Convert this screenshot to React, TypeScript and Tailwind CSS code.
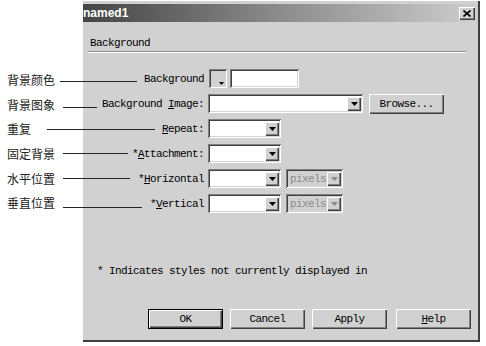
import type { ReactNode } from 'react'

const raised =
  'bg-[#d1d1d1] shadow-[inset_1px_1px_0_#ffffff,inset_-1px_-1px_0_#404040,inset_-2px_-2px_0_#808080]'
const sunken =
  'shadow-[inset_1px_1px_0_#808080,inset_-1px_-1px_0_#ffffff,inset_2px_2px_0_#404040,inset_-2px_-2px_0_#d4d4d4]'

function Arrow({ muted = false }: { muted?: boolean }) {
  return (
    <span className={`flex h-[14px] w-[14px] items-center justify-center ${raised}`}>
      <svg width="7" height="4" viewBox="0 0 7 4">
        <path d="M0 0h7L3.5 4z" fill={muted ? '#8a8a8a' : '#000'} />
      </svg>
    </span>
  )
}

function Combo({ width, muted = false, text }: { width: string; muted?: boolean; text?: string }) {
  return (
    <div
      className={`flex h-[19px] items-center justify-between pl-[4px] pr-[2px] ${width} ${sunken} ${
        muted ? 'bg-[#d1d1d1] text-[#8a8a8a]' : 'bg-white'
      }`}
    >
      <span>{text}</span>
      <Arrow muted={muted} />
    </div>
  )
}

function Row({ label, children }: { label: ReactNode; children: ReactNode }) {
  return (
    <div className="flex h-[19px] items-center">
      <div className="w-[121px] shrink-0 text-right">{label}</div>
      <div className="ml-[4px] flex items-center">{children}</div>
    </div>
  )
}

function Btn({ children, def = false, className = '' }: { children: ReactNode; def?: boolean; className?: string }) {
  return (
    <div
      className={`flex h-[20px] w-[75px] items-center justify-center ${def ? 'border border-black' : ''} ${className}`}
    >
      <div className={`flex h-full w-full items-center justify-center ${raised}`}>{children}</div>
    </div>
  )
}

const notes = [
  { text: '背景颜色', top: 73, line: 81, x1: 60, x2: 137 },
  { text: '背景图象', top: 98, line: 107, x1: 63, x2: 97 },
  { text: '重复', top: 122, line: 129, x1: 47, x2: 155 },
  { text: '固定背景', top: 147, line: 153, x1: 63, x2: 128 },
  { text: '水平位置', top: 172, line: 178, x1: 63, x2: 130 },
  { text: '垂直位置', top: 196, line: 207, x1: 63, x2: 142 },
]

export default function App() {
  return (
    <div className="relative h-[346px] w-[486px] overflow-hidden bg-white">
      <div className="ml-[83px] mt-[1px] flex h-[341px] w-[397px] flex-col border-r-2 border-b-2 border-[#404040] bg-[#d1d1d1] pt-[3px] pr-px font-['Liberation_Mono',monospace] text-[11px] leading-[12px] tracking-[-0.6px] text-black">
        <div className="flex h-[18px] items-center justify-between bg-linear-to-r from-[#454545] via-[#8c8c8c] to-[#cdcdcd]">
          <span className="font-['Liberation_Sans',sans-serif] text-[12px] font-bold tracking-normal text-white">
            named1
          </span>
          <div className={`mr-[2px] flex h-[13px] w-[16px] items-center justify-center ${raised}`}>
            <svg width="8" height="7" viewBox="0 0 8 7">
              <path d="M0.5 0.5l7 6M7.5 0.5l-7 6" stroke="#000" strokeWidth="1.6" />
            </svg>
          </div>
        </div>

        <div className="mt-[15px] pl-[7px]">Background</div>
        <div className="ml-[5px] mr-[11px] mt-[2px] h-[2px] border-t border-b border-t-[#8a8a8a] border-b-white" />

        <div className="mt-[16px] flex flex-col gap-[6px]">
          <Row label="Background">
            <div className={`relative ml-px h-[19px] w-[18px] bg-[#d1d1d1] ${sunken}`}>
              <svg className="absolute right-[3px] bottom-[3px]" width="5" height="3" viewBox="0 0 5 3">
                <path d="M0 0h5L2.5 3z" fill="#000" />
              </svg>
            </div>
            <div className={`ml-[3px] h-[19px] w-[69px] bg-white ${sunken}`} />
          </Row>
          <Row
            label={
              <>
                Background <u>I</u>mage:
              </>
            }
          >
            <Combo width="w-[155px]" />
            <Btn className="ml-[6px] w-[71px]">Browse...</Btn>
          </Row>
          <Row
            label={
              <>
                <u>R</u>epeat:
              </>
            }
          >
            <Combo width="w-[73px]" />
          </Row>
          <Row
            label={
              <>
                *<u>A</u>ttachment:
              </>
            }
          >
            <Combo width="w-[73px]" />
          </Row>
          <Row
            label={
              <>
                *<u>H</u>orizontal
              </>
            }
          >
            <Combo width="w-[73px]" />
            <div className="ml-[5px]">
              <Combo width="w-[57px]" muted text="pixels" />
            </div>
          </Row>
          <Row
            label={
              <>
                *<u>V</u>ertical
              </>
            }
          >
            <Combo width="w-[73px]" />
            <div className="ml-[5px]">
              <Combo width="w-[57px]" muted text="pixels" />
            </div>
          </Row>
        </div>

        <div className="mt-[52px] pl-[14px]">* Indicates styles not currently displayed in</div>

        <div className="mt-[32px] flex gap-[7px] pl-[65px]">
          <Btn def>OK</Btn>
          <Btn>Cancel</Btn>
          <Btn>Apply</Btn>
          <Btn className="ml-[2px]">
            <u>H</u>elp
          </Btn>
        </div>
      </div>

      {notes.map((n) => (
        <div key={n.text}>
          <span
            className="absolute left-[7px] font-['Noto_Sans_CJK_SC',sans-serif] text-[12px] leading-[14px] text-[#222]"
            style={{ top: n.top }}
          >
            {n.text}
          </span>
          <span
            className="absolute h-px bg-[#222]"
            style={{ top: n.line, left: n.x1, width: n.x2 - n.x1 }}
          />
        </div>
      ))}
    </div>
  )
}
